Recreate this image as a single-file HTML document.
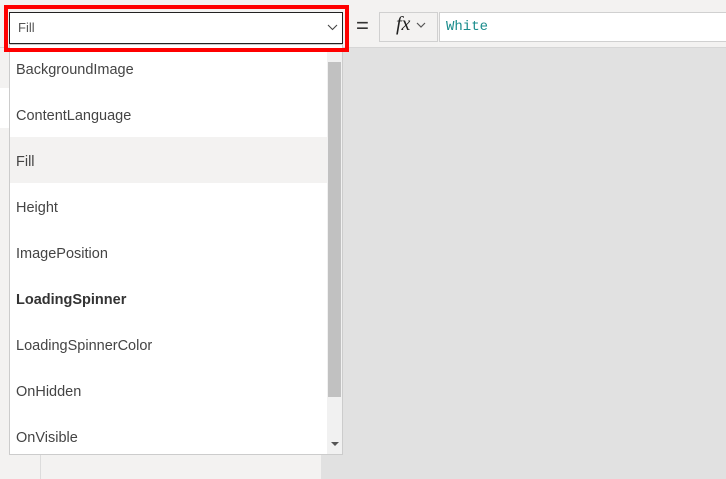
<!DOCTYPE html>
<html><head><style>
body{margin:0;width:726px;height:479px;position:relative;overflow:hidden;background:#f3f2f1;font-family:"Segoe UI","Liberation Sans",sans-serif;}
.a{position:absolute}
</style></head><body>
<div class="a" style="left:0;top:0;width:726px;height:47px;background:#f3f2f1;border-bottom:1px solid #d6d6d6"></div>
<div class="a" style="left:321px;top:48px;width:405px;height:431px;background:#e1e1e1"></div>
<div class="a" style="left:40px;top:48px;width:1px;height:431px;background:#dcdcdc"></div>
<div class="a" style="left:0;top:88px;width:10px;height:40px;background:#fff"></div>
<!-- formula -->
<div class="a" style="left:356px;top:13px;font-size:22px;color:#333">=</div>
<div class="a" style="left:379px;top:12px;width:59px;height:30px;background:#f3f2f1;border:1px solid #d0d0d0;box-sizing:border-box"></div>
<div class="a" style="left:396px;top:13px;font-family:'Liberation Serif',serif;font-style:italic;font-size:20px;color:#222">fx</div>
<svg class="a" style="left:416px;top:22px" width="10" height="7"><path d="M1 1L5 5L9 1" stroke="#555" fill="none" stroke-width="1.2"/></svg>
<div class="a" style="left:439px;top:12px;width:290px;height:30px;background:#fff;border:1px solid #d0d0d0;box-sizing:border-box"></div>
<div class="a" style="left:446px;top:19px;font-family:'Liberation Mono',monospace;font-size:14px;color:#1a8c8c">White</div>
<!-- dropdown list -->
<div class="a" style="left:9px;top:44px;width:334px;height:411px;background:#fff;border:1px solid #ccc;box-sizing:border-box"></div>
<div class="a" style="left:10px;top:137px;width:317px;height:46px;background:#f3f2f1"></div>
<div class="a" style="left:327px;top:48px;width:15px;height:406px;background:#f1f1f1"></div>
<div class="a" style="left:328px;top:62px;width:13px;height:335px;background:#c1c1c1"></div>
<svg class="a" style="left:331px;top:442px" width="8" height="5"><path d="M0 0H8L4 4Z" fill="#555"/></svg>
<div class="a" style="left:16px;top:61px;font-size:14.5px;color:#444;line-height:18px">
<div style="height:46px">BackgroundImage</div>
<div style="height:46px">ContentLanguage</div>
<div style="height:46px">Fill</div>
<div style="height:46px">Height</div>
<div style="height:46px">ImagePosition</div>
<div style="height:46px;font-weight:bold;color:#333">LoadingSpinner</div>
<div style="height:46px">LoadingSpinnerColor</div>
<div style="height:46px">OnHidden</div>
<div style="height:46px">OnVisible</div>
</div>
<!-- input -->
<div class="a" style="left:4px;top:5px;width:345px;height:47px;border:4px solid #f00;box-sizing:border-box"></div>
<div class="a" style="left:9px;top:12px;width:334px;height:32px;background:#fff;border:1px solid #222;box-sizing:border-box"></div>
<div class="a" style="left:18px;top:20px;font-size:13px;color:#555">Fill</div>
<svg class="a" style="left:327px;top:24px" width="11" height="7"><path d="M1 1L5.5 5.5L10 1" stroke="#444" fill="none" stroke-width="1.1"/></svg>
</body></html>
